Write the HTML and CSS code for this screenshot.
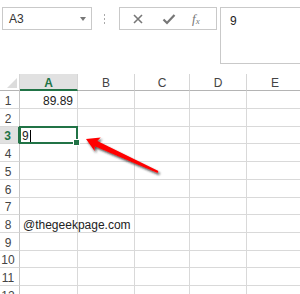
FILE: index.html
```html
<!DOCTYPE html>
<html>
<head>
<meta charset="utf-8">
<link rel="stylesheet" href="styles.css">
</head>
<body>
<div class="app">
  <div class="fbar">
    <div class="namebox"><span>A3</span><span class="dd"></span></div>
    <div class="grip"><i></i><i></i><i></i></div>
    <div class="btns">
      <svg class="ic" width="12" height="12" viewBox="0 0 12 12"><path d="M2 2 L10 10 M10 2 L2 10" stroke="#777" stroke-width="1.6" fill="none"/></svg>
      <svg class="ic" width="14" height="12" viewBox="0 0 14 12"><path d="M1.5 6.5 L5 10 L12.5 2" stroke="#777" stroke-width="2.2" fill="none"/></svg>
      <span class="fx">f<sub>x</sub></span>
    </div>
    <div class="fbox">9</div>
  </div>
  <div class="grid">
    <div class="corner"><span class="tri"></span></div>
    <div class="ch sel">A</div><div class="ch">B</div><div class="ch">C</div><div class="ch">D</div><div class="ch">E</div>

    <div class="rh">1</div><div class="c num">89.89</div><div class="c"></div><div class="c"></div><div class="c"></div><div class="c"></div>
    <div class="rh">2</div><div class="c"></div><div class="c"></div><div class="c"></div><div class="c"></div><div class="c"></div>
    <div class="rh sel">3</div><div class="c active">9<span class="caret"></span><span class="handle"></span></div><div class="c"></div><div class="c"></div><div class="c"></div><div class="c"></div>
    <div class="rh">4</div><div class="c"></div><div class="c"></div><div class="c"></div><div class="c"></div><div class="c"></div>
    <div class="rh">5</div><div class="c"></div><div class="c"></div><div class="c"></div><div class="c"></div><div class="c"></div>
    <div class="rh">6</div><div class="c"></div><div class="c"></div><div class="c"></div><div class="c"></div><div class="c"></div>
    <div class="rh">7</div><div class="c"></div><div class="c"></div><div class="c"></div><div class="c"></div><div class="c"></div>
    <div class="rh">8</div><div class="c txt">@thegeekpage.com</div><div class="c"></div><div class="c"></div><div class="c"></div><div class="c"></div>
    <div class="rh">9</div><div class="c"></div><div class="c"></div><div class="c"></div><div class="c"></div><div class="c"></div>
    <div class="rh">10</div><div class="c"></div><div class="c"></div><div class="c"></div><div class="c"></div><div class="c"></div>
    <div class="rh">11</div><div class="c"></div><div class="c"></div><div class="c"></div><div class="c"></div><div class="c"></div>
    <div class="rh">12</div><div class="c"></div><div class="c"></div><div class="c"></div><div class="c"></div><div class="c"></div>
  </div>
  <svg class="arrow" width="300" height="294" viewBox="0 0 300 294">
    <defs>
      <filter id="sh" x="-20%" y="-20%" width="140%" height="140%">
        <feDropShadow dx="1.5" dy="2" stdDeviation="1.2" flood-color="#222" flood-opacity="0.8"/>
      </filter>
    </defs>
    <polygon filter="url(#sh)" fill="#ff0000" points="86,139 100.7,137.6 97.3,140.9 158.4,171.1 157.6,172.9 94.8,146.3 94.6,151"/>
  </svg>
</div>
</body>
</html>
```
FILE: styles.css
```css
html, body {
  margin: 0;
  padding: 0;
  background: #fff;
}
body {
  width: 300px;
  height: 294px;
  overflow: hidden;
  font-family: "Liberation Sans", Arial, sans-serif;
  color: #222;
}
.app {
  position: relative;
  width: 300px;
  height: 294px;
  overflow: hidden;
}
.fbar {
  display: flex;
  align-items: flex-start;
  padding-top: 7px;
  height: 67px;
  box-sizing: border-box;
}
.namebox {
  margin-left: 2px;
  width: 90px;
  height: 23px;
  box-sizing: border-box;
  border: 1px solid #c9c9c9;
  display: flex;
  align-items: center;
  justify-content: space-between;
  padding: 1px 5px 0 6px;
  font-size: 12px;
  color: #333;
}
.dd {
  width: 0;
  height: 0;
  border-left: 3.5px solid transparent;
  border-right: 3.5px solid transparent;
  border-top: 4px solid #777;
}
.grip {
  width: 27px;
  height: 23px;
  display: flex;
  flex-direction: column;
  align-items: center;
  justify-content: center;
  gap: 2px;
  padding-right: 2px;
  box-sizing: border-box;
}
.grip i {
  display: block;
  width: 1px;
  height: 2px;
  background: #aaa;
}
.btns {
  width: 98px;
  height: 23px;
  box-sizing: border-box;
  border: 1px solid #c9c9c9;
  display: flex;
  align-items: center;
  padding-left: 12px;
  gap: 18px;
}
.fx {
  font-family: "Liberation Serif", "Times New Roman", serif;
  font-style: italic;
  font-size: 13px;
  color: #777;
  margin-left: -2px;
}
.fx sub {
  font-size: 9px;
  vertical-align: -1px;
}
.fbox {
  margin-left: 3px;
  flex: 1;
  height: 57px;
  box-sizing: border-box;
  border: 1px solid #c9c9c9;
  border-right: none;
  padding: 6px 0 0 9px;
  font-size: 12px;
  color: #222;
}
.grid {
  margin-top: 7px;
  display: grid;
  grid-template-columns: 20px 58px 57px 55px 57px 57px;
  grid-template-rows: 17px 18px 18px 17px 18px 18px 18px 17px 18px 18px 17px 18px 18px;
  font-size: 12px;
}
.corner {
  border-right: 1px solid #d6d6d6;
  border-bottom: 1px solid #b4b4b4;
  position: relative;
}
.tri {
  position: absolute;
  right: 2px;
  bottom: 2px;
  width: 0;
  height: 0;
  border-left: 10px solid transparent;
  border-bottom: 10px solid #dcdcdc;
}
.ch {
  border-right: 1px solid #d6d6d6;
  border-bottom: 1px solid #b4b4b4;
  display: flex;
  align-items: center;
  justify-content: center;
  padding-top: 2px;
  color: #444;
  font-size: 12px;
}
.ch.sel {
  background: #e1e1e1;
  border-bottom: 2px solid #217346;
  color: #217346;
  font-weight: bold;
  padding-top: 3px;
}
.rh {
  border-right: 1px solid #c6c6c6;
  border-bottom: 1px solid #d9d9d9;
  display: flex;
  align-items: center;
  justify-content: center;
  padding: 2px 3px 0 0;
  color: #444;
  font-size: 12px;
}
.rh.sel {
  background: #e1e1e1;
  border-right: 2px solid #217346;
  color: #217346;
  font-weight: bold;
}
.c {
  border-right: 1px solid #d9d9d9;
  border-bottom: 1px solid #d9d9d9;
  display: flex;
  align-items: center;
  padding-top: 2px;
  white-space: nowrap;
  font-size: 12px;
  color: #222;
  position: relative;
}
.num {
  justify-content: flex-end;
  padding-right: 4px;
}
.txt {
  padding-left: 3px;
  overflow: visible;
  z-index: 1;
}
.active {
  padding-left: 2px;
}
.active::after {
  content: "";
  position: absolute;
  left: -1px;
  top: -1px;
  right: -1px;
  bottom: -1px;
  border: 2px solid #217346;
}
.caret {
  display: inline-block;
  width: 1px;
  height: 13px;
  background: #000;
  margin-left: 1px;
}
.handle {
  position: absolute;
  right: -3px;
  bottom: -3px;
  width: 5px;
  height: 5px;
  background: #217346;
  border: 1px solid #fff;
  z-index: 2;
}
.arrow {
  position: absolute;
  left: 0;
  top: 0;
  pointer-events: none;
}
```
